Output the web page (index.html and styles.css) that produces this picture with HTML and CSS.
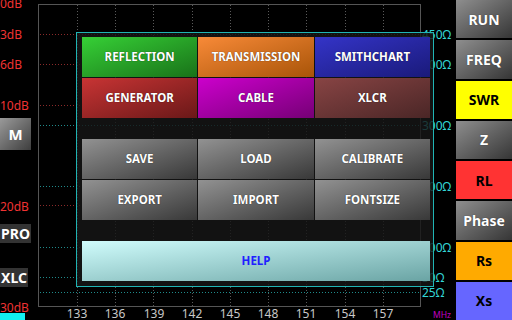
FILE: index.html
```html
<!DOCTYPE html>
<html lang="en">
<head>
    <meta charset="UTF-8">
    <title>Antenna analyzer</title>
    <link rel="stylesheet" href="styles.css">
</head>
<body>
    <div class="screen">
        <div class="chart">
            <svg class="plot" width="456" height="320" viewBox="0 0 456 320">
                <!-- vertical grid -->
                <g class="grid-v">
                    <line x1="77.5" y1="5" x2="77.5" y2="306" />
                    <line x1="115.5" y1="5" x2="115.5" y2="306" />
                    <line x1="153.5" y1="5" x2="153.5" y2="306" />
                    <line x1="192.5" y1="5" x2="192.5" y2="306" />
                    <line x1="230.5" y1="5" x2="230.5" y2="306" />
                    <line x1="268.5" y1="5" x2="268.5" y2="306" />
                    <line x1="306.5" y1="5" x2="306.5" y2="306" />
                    <line x1="345.5" y1="5" x2="345.5" y2="306" />
                    <line x1="383.5" y1="5" x2="383.5" y2="306" />
                </g>
                <!-- dB grid -->
                <g class="grid-db">
                    <line x1="40" y1="34.5" x2="420" y2="34.5" />
                    <line x1="40" y1="64.5" x2="420" y2="64.5" />
                    <line x1="40" y1="105.5" x2="420" y2="105.5" />
                    <line x1="40" y1="205.5" x2="420" y2="205.5" />
                </g>
                <!-- ohm grid -->
                <g class="grid-ohm">
                    <line x1="40" y1="125.5" x2="420" y2="125.5" />
                    <line x1="40" y1="186.5" x2="420" y2="186.5" />
                    <line x1="40" y1="247.5" x2="420" y2="247.5" />
                    <line x1="40" y1="277.5" x2="420" y2="277.5" />
                    <line x1="40" y1="292.5" x2="420" y2="292.5" />
                </g>
                <rect class="frame" x="38.5" y="4.5" width="382" height="302" />

                <g class="lbl-db">
                    <text x="0" y="8">0dB</text>
                    <text x="0" y="39">3dB</text>
                    <text x="0" y="69">6dB</text>
                    <text x="0" y="110">10dB</text>
                    <text x="0" y="211">20dB</text>
                    <text x="0" y="312">30dB</text>
                </g>
                <g class="lbl-ohm">
                    <text x="422" y="39">450Ω</text>
                    <text x="422" y="69">400Ω</text>
                    <text x="422" y="130">300Ω</text>
                    <text x="422" y="191">200Ω</text>
                    <text x="422" y="252">100Ω</text>
                    <text x="422" y="282">50Ω</text>
                    <text x="422" y="297">25Ω</text>
                </g>
                <g class="lbl-mhz">
                    <text x="77" y="318">133</text>
                    <text x="115" y="318">136</text>
                    <text x="154" y="318">139</text>
                    <text x="192" y="318">142</text>
                    <text x="230" y="318">145</text>
                    <text x="268" y="318">148</text>
                    <text x="306" y="318">151</text>
                    <text x="345" y="318">154</text>
                    <text x="383" y="318">157</text>
                </g>
                <text class="unit" x="433" y="318">MHz</text>
            </svg>

            <div class="mem-btn">M</div>
            <div class="tag pro">PRO</div>
            <div class="tag xlc">XLC</div>
            <div class="level"></div>

            <div class="menu">
                <div class="menu-grid">
                    <div class="mbtn reflection">REFLECTION</div>
                    <div class="mbtn transmission">TRANSMISSION</div>
                    <div class="mbtn smith">SMITHCHART</div>
                    <div class="mbtn generator">GENERATOR</div>
                    <div class="mbtn cable">CABLE</div>
                    <div class="mbtn xlcr">XLCR</div>
                </div>
                <div class="menu-grid">
                    <div class="mbtn grey">SAVE</div>
                    <div class="mbtn grey">LOAD</div>
                    <div class="mbtn grey">CALIBRATE</div>
                    <div class="mbtn grey">EXPORT</div>
                    <div class="mbtn grey">IMPORT</div>
                    <div class="mbtn grey">FONTSIZE</div>
                </div>
                <div class="mbtn help">HELP</div>
            </div>
        </div>

        <div class="modes">
            <div class="mode">RUN</div>
            <div class="mode">FREQ</div>
            <div class="mode swr">SWR</div>
            <div class="mode">Z</div>
            <div class="mode rl">RL</div>
            <div class="mode">Phase</div>
            <div class="mode rs">Rs</div>
            <div class="mode xs">Xs</div>
        </div>
    </div>
</body>
</html>
```

FILE: styles.css
```css
* {
    padding: 0px;
    margin: 0px;
    box-sizing: border-box;
}

body {
    background-color: #000;
    font-family: "Noto Sans", "Open Sans", sans-serif;
}

.screen {
    display: flex;
    width: 512px;
    height: 320px;
    overflow: hidden;
}

.chart {
    position: relative;
    width: 456px;
    height: 320px;
}

.plot {
    display: block;
}

.plot line {
    stroke-width: 1;
    stroke-dasharray: 1 2;
}

.grid-v line {
    stroke: #5a5a5a;
}

.grid-db line {
    stroke: #8a2a2a;
}

.grid-ohm line {
    stroke: #1f8a8a;
}

.frame {
    fill: none;
    stroke: #555;
    stroke-width: 1;
}

.plot text {
    font-family: "Noto Sans", "Open Sans", sans-serif;
    font-size: 12px;
}

.lbl-db text {
    fill: #f03333;
}

.lbl-ohm text {
    fill: #33d6d6;
}

.lbl-mhz text {
    fill: #c8c8c8;
    text-anchor: middle;
}

.plot .unit {
    fill: #c000c0;
    font-size: 8.5px;
}

/* left side buttons */
.mem-btn {
    position: absolute;
    left: 0px;
    top: 118px;
    width: 31px;
    height: 32px;
    background: linear-gradient(to bottom right, #9a9a9a, #3e3e3e);
    color: #fff;
    font-weight: bold;
    font-size: 15px;
    line-height: 32px;
    text-align: center;
}

.tag {
    position: absolute;
    left: 0px;
    height: 19px;
    padding: 0px 1px;
    background-color: #333;
    color: #fff;
    font-weight: bold;
    font-size: 14px;
    line-height: 19px;
}

.pro {
    top: 224px;
}

.xlc {
    top: 268px;
}

.level {
    position: absolute;
    left: 0px;
    top: 313px;
    width: 25px;
    height: 7px;
    background-color: #11f0f0;
}

/* overlay menu */
.menu {
    position: absolute;
    left: 76px;
    top: 32px;
    width: 358px;
    display: flex;
    flex-direction: column;
    gap: 21px;
    padding: 4px 3px 5px 5px;
    border: 1px solid #20b4b4;
    background-color: rgba(22, 22, 22, 0.82);
}

.menu-grid {
    display: grid;
    grid-template-columns: 1fr 1fr 1fr;
    grid-auto-rows: 40px;
    gap: 1px;
}

.mbtn {
    height: 40px;
    color: #fff;
    font-weight: bold;
    font-size: 11.5px;
    line-height: 40px;
    text-align: center;
    text-shadow: 0px 0px 1px rgba(0, 0, 0, 0.7);
}

.reflection {
    background: linear-gradient(to bottom right, #36d036, #197219);
}

.transmission {
    background: linear-gradient(to bottom right, #f88a38, #a85408);
}

.smith {
    background: linear-gradient(to bottom right, #3434c8, #1a1a7a);
}

.generator {
    background: linear-gradient(to bottom right, #c83434, #6a1818);
}

.cable {
    background: linear-gradient(to bottom right, #cc00cc, #760076);
}

.xlcr {
    background: linear-gradient(to bottom right, #884444, #4a2626);
}

.grey {
    background: linear-gradient(to bottom right, #929292, #383838);
}

.help {
    background: linear-gradient(to bottom right, #d0fcfc, #6aa4a4);
    color: #2020ff;
    text-shadow: none;
}

/* mode column */
.modes {
    display: flex;
    flex-direction: column;
    gap: 2px;
    width: 56px;
    height: 320px;
}

.mode {
    flex: 1;
    display: flex;
    align-items: center;
    justify-content: center;
    background: linear-gradient(to bottom right, #8e8e8e, #363636);
    color: #fff;
    font-weight: bold;
    font-size: 14px;
    text-shadow: 0px 0px 1px rgba(0, 0, 0, 0.6);
}

.swr,
.rl,
.rs,
.xs {
    color: #000;
    text-shadow: none;
}

.swr {
    background: #ffff00;
}

.rl {
    background: #ff3333;
}

.rs {
    background: #ffaa00;
}

.xs {
    background: #6666ff;
}
```
